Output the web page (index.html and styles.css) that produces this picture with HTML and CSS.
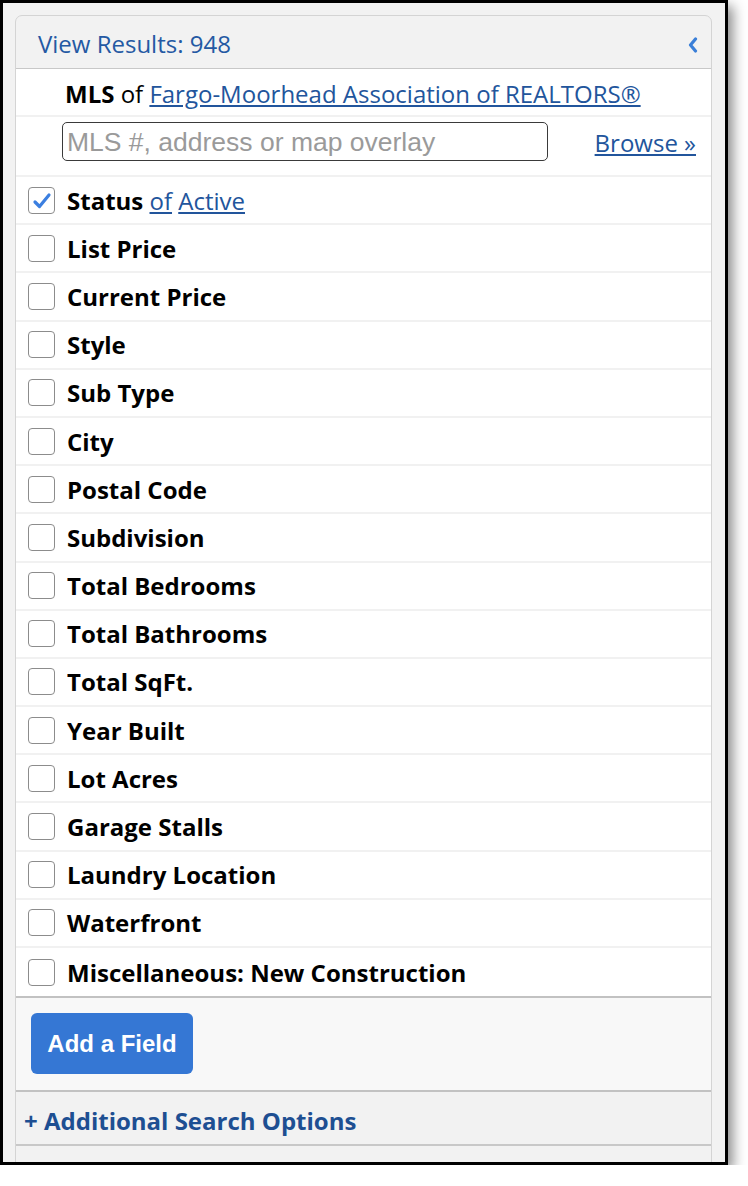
FILE: index.html
```html
<!DOCTYPE html>
<html lang="en">

<head>
  <meta charset="UTF-8" />
  <meta name="viewport" content="width=device-width, initial-scale=1.0" />
  <title>Search Fields</title>
  <link rel="stylesheet" href="styles.css">
</head>

<body>
  <div class="window">
    <div class="panel">
      <div class="panel-head">
        <span class="results">View Results: 948</span>
        <svg class="chevron" width="10" height="16" viewBox="0 0 10 16">
          <polyline points="7.5,2 2.5,8 7.5,14" fill="none" stroke="#3a7fd8" stroke-width="3.2"
            stroke-linecap="round" stroke-linejoin="round" />
        </svg>
      </div>

      <div class="mls-row">
        <span><b>MLS</b> of <a href="#">Fargo-Moorhead Association of REALTORS®</a></span>
      </div>

      <div class="search-row">
        <input type="text" class="search" placeholder="MLS #, address or map overlay" />
        <a href="#" class="browse">Browse »</a>
      </div>

      <ul class="fields">
        <li>
          <span class="box checked">
            <svg width="22" height="20" viewBox="0 0 22 20">
              <path d="M4 11 L8.5 15.5 L18 4" fill="none" stroke="#3b7fe0" stroke-width="3.2" stroke-linecap="round"
                stroke-linejoin="round" />
            </svg>
          </span>
          <span class="label"><b>Status</b> <a href="#">of</a> <a href="#">Active</a></span>
        </li>
        <li><span class="box"></span><span class="label"><b>List Price</b></span></li>
        <li><span class="box"></span><span class="label"><b>Current Price</b></span></li>
        <li><span class="box"></span><span class="label"><b>Style</b></span></li>
        <li><span class="box"></span><span class="label"><b>Sub Type</b></span></li>
        <li><span class="box"></span><span class="label"><b>City</b></span></li>
        <li><span class="box"></span><span class="label"><b>Postal Code</b></span></li>
        <li><span class="box"></span><span class="label"><b>Subdivision</b></span></li>
        <li><span class="box"></span><span class="label"><b>Total Bedrooms</b></span></li>
        <li><span class="box"></span><span class="label"><b>Total Bathrooms</b></span></li>
        <li><span class="box"></span><span class="label"><b>Total SqFt.</b></span></li>
        <li><span class="box"></span><span class="label"><b>Year Built</b></span></li>
        <li><span class="box"></span><span class="label"><b>Lot Acres</b></span></li>
        <li><span class="box"></span><span class="label"><b>Garage Stalls</b></span></li>
        <li><span class="box"></span><span class="label"><b>Laundry Location</b></span></li>
        <li><span class="box"></span><span class="label"><b>Waterfront</b></span></li>
        <li><span class="box"></span><span class="label"><b>Miscellaneous: New Construction</b></span></li>
      </ul>

      <div class="actions">
        <button class="add-field">Add a Field</button>
      </div>

      <div class="more">+ Additional Search Options</div>
    </div>
  </div>
</body>

</html>
```

FILE: styles.css
```css
body {
  margin: 0;
  background: #ffffff;
  font-family: "Open Sans", Arial, sans-serif;
}

.window {
  width: 722px;
  height: 1159px;
  border: 3px solid #000;
  background: #f2f2f2;
  overflow: hidden;
  box-shadow: 5px 6px 12px rgba(0, 0, 0, 0.45);
}

.panel {
  margin: 12px 13px 0 12px;
  min-height: 1200px;
  background: #f2f2f2;
  border: 1px solid #d4d4d4;
  border-radius: 7px 7px 0 0;
}

.panel-head {
  display: flex;
  align-items: center;
  justify-content: space-between;
  height: 52px;
  padding: 0 13px 0 22px;
  border-bottom: 1px solid #c8c8c8;
  border-radius: 7px 7px 0 0;
}

.results {
  font-size: 24px;
  color: #2459a3;
  padding-top: 2px;
}

.chevron {
  margin-top: 6px;
}

.mls-row {
  background: #fff;
  height: 46px;
  padding: 0 0 0 49px;
  display: flex;
  align-items: center;
  font-size: 24px;
  color: #000;
  border-bottom: 2px solid #f1f1f1;
}

.mls-row span {
  padding-top: 3px;
}

a {
  color: #22559c;
}

.search-row {
  background: #fff;
  display: flex;
  align-items: center;
  justify-content: space-between;
  padding: 5px 15px 14px 46px;
  border-bottom: 2px solid #f1f1f1;
}

.search {
  height: 36px;
  box-sizing: content-box;
  padding: 1px 4px 0;
  margin: 0;
  border: 1px solid #3a3a3a;
  border-radius: 5px;
  font-family: "Liberation Sans", Arial, sans-serif;
  font-size: 26.5px;
  color: #333;
  width: 476px;
}

.search::placeholder {
  color: #9a9a9a;
}

.browse {
  font-size: 24px;
  padding-top: 1px;
}

.fields {
  list-style: none;
  margin: 0;
  padding: 0;
  background: #fff;
  border-bottom: 2px solid #c2c2c2;
}

.fields li {
  display: flex;
  align-items: center;
  gap: 12px;
  height: 46.2px;
  padding-left: 12px;
  font-size: 24px;
  border-bottom: 2px solid #f1f1f1;
}

.fields li:last-child {
  border-bottom: none;
  height: 48px;
}

.label a {
  font-weight: normal;
}

.box {
  flex: none;
  width: 25px;
  height: 25px;
  border: 1px solid #8c8c8c;
  border-radius: 4px;
  background: #fff;
  display: flex;
  align-items: center;
  justify-content: center;
}

.box svg {
  margin-top: 1px;
}

.actions {
  background: #f8f8f8;
  padding: 15px 15px 16px 15px;
  border-bottom: 2px solid #c2c2c2;
}

.add-field {
  width: 162px;
  height: 61px;
  border: none;
  border-radius: 6px;
  background: #3577d4;
  color: #fff;
  font-family: "Liberation Sans", Arial, sans-serif;
  font-weight: bold;
  font-size: 24px;
  cursor: pointer;
}

.more {
  height: 54px;
  display: flex;
  align-items: center;
  padding: 4px 0 0 8px;
  box-sizing: border-box;
  font-size: 24px;
  font-weight: bold;
  color: #1e4f92;
  border-bottom: 2px solid #c8c8c8;
}
```
